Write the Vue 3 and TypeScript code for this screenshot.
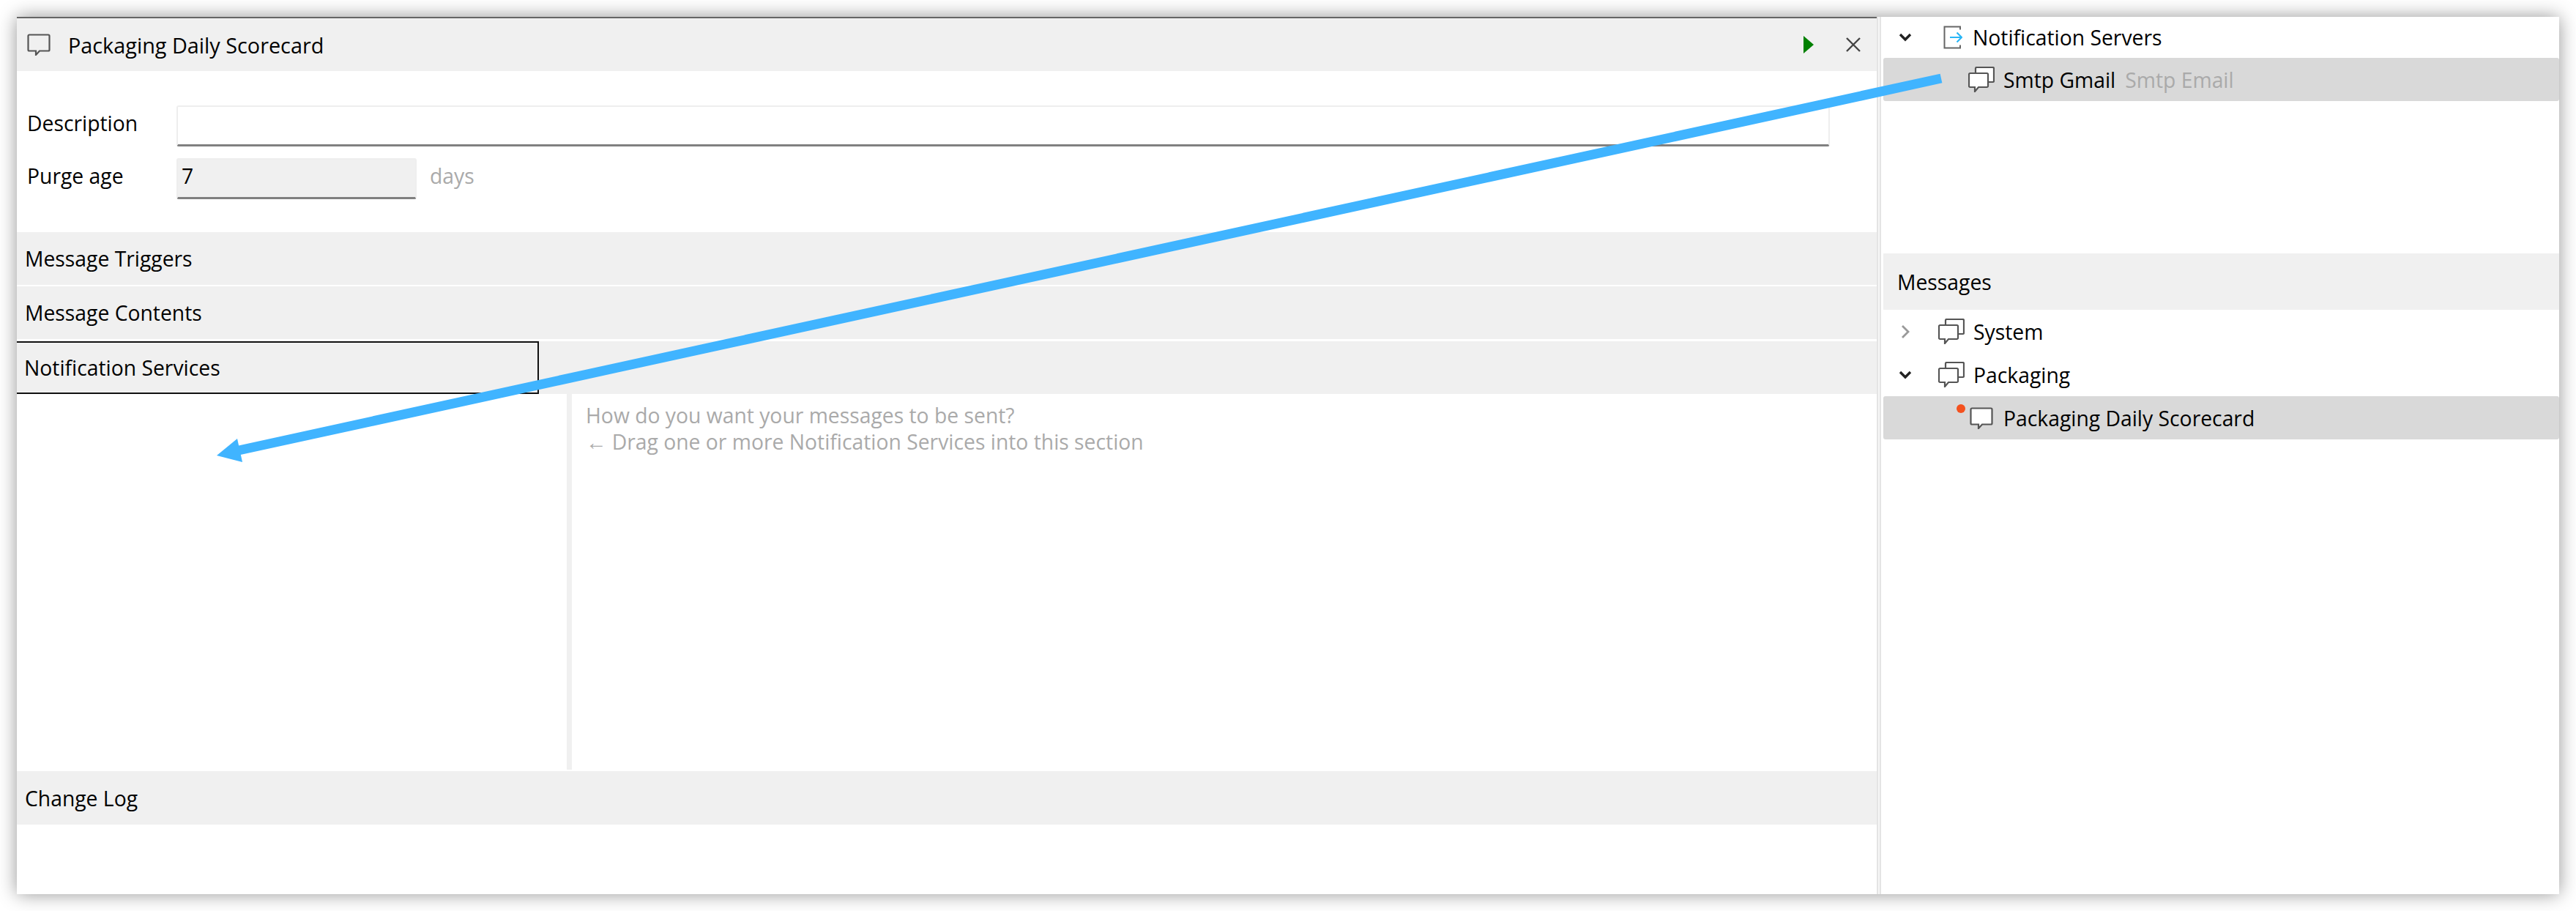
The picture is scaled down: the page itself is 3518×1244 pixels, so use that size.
<script setup lang="ts">
interface Row { label: string; sub?: string; chevron?: 'down' | 'right'; icon: 'server' | 'double' | 'single'; selected?: boolean; dot?: boolean; depth: number }
const serverRows: Row[] = [
  { label: 'Notification Servers', chevron: 'down', icon: 'server', depth: 0 },
  { label: 'Smtp Gmail', sub: 'Smtp Email', icon: 'double', selected: true, depth: 1 },
]
const messageRows: Row[] = [
  { label: 'System', chevron: 'right', icon: 'double', depth: 0 },
  { label: 'Packaging', chevron: 'down', icon: 'double', depth: 0 },
  { label: 'Packaging Daily Scorecard', icon: 'single', selected: true, dot: true, depth: 1 },
]
</script>

<template>
  <div class="page">
    <div class="window">
      <section class="editor">
        <header class="band title">
          <svg class="bubble" width="32" height="30" viewBox="0 0 32 30"><path d="M3 1.5h26a1.5 1.5 0 0 1 1.5 1.5v19a1.5 1.5 0 0 1-1.5 1.5H17l-5 5.500v-5.500H3a1.500 1.500 0 0 1-1.500-1.500V3A1.500 1.500 0 0 1 3 1.500z" /></svg>
          <span class="title-text">Packaging Daily Scorecard</span>
          <svg class="play" width="16" height="24" viewBox="0 0 16 24"><path d="M1 0l14 12L1 24z" /></svg>
          <svg class="close" width="20" height="20" viewBox="0 0 20 20"><path d="M1 1l18 18M19 1L1 19" /></svg>
        </header>
        <div class="form">
          <div class="field">
            <label class="field-label">Description</label>
            <div class="input wide"></div>
          </div>
          <div class="field second">
            <label class="field-label">Purge age</label>
            <div class="input short">7</div>
            <span class="unit">days</span>
          </div>
        </div>
        <div class="band section">Message Triggers</div>
        <div class="band section gap">Message Contents</div>
        <div class="band section gap focus-row"><div class="focus-box">Notification Services</div></div>
        <div class="split">
          <div class="drop"></div>
          <div class="splitter"></div>
          <div class="hint">
            <div>How do you want your messages to be sent?</div>
            <div>← Drag one or more Notification Services into this section</div>
          </div>
        </div>
        <div class="band section log">Change Log</div>
      </section>
      <div class="gutter"></div>
      <aside class="side">
        <div class="tree servers">
          <div v-for="r in serverRows" :key="r.label" class="row" :class="{ selected: r.selected, child: r.depth }">
            <span class="chev">
              <svg v-if="r.chevron === 'down'" width="18" height="12" viewBox="0 0 18 12"><path class="chev-dark" d="M2 2l7 7 7-7" /></svg>
            </span>
            <svg v-if="r.icon === 'server'" class="ico-server" width="26" height="32" viewBox="0 0 26 32"><path class="srv" d="M23 5.500V1.500H1.500v29H23v-4" /><path class="srv-arrow" d="M9 16h16M18.500 9.500L25 16l-6.500 6.500" /></svg>
            <svg v-else class="ico-double" width="36" height="35" viewBox="0 0 36 35"><path class="bub" d="M10 8V2.500a1.500 1.500 0 0 1 1.500-1.500h22a1.500 1.500 0 0 1 1.500 1.500v17a1.500 1.500 0 0 1-1.500 1.500H27" /><path class="bub" d="M2.500 9h23a1.500 1.500 0 0 1 1.500 1.500v16a1.500 1.500 0 0 1-1.500 1.500H14l-5 6v-6H2.500A1.500 1.500 0 0 1 1 26.500v-16A1.500 1.500 0 0 1 2.500 9z" /></svg>
            <span class="label">{{ r.label }}</span>
            <span v-if="r.sub" class="sub">{{ r.sub }}</span>
          </div>
        </div>
        <div class="band messages">Messages</div>
        <div class="tree">
          <div v-for="r in messageRows" :key="r.label" class="row" :class="{ selected: r.selected, child: r.depth, leaf: r.icon === 'single' }">
            <span class="chev">
              <svg v-if="r.chevron === 'down'" width="18" height="12" viewBox="0 0 18 12"><path class="chev-dark" d="M2 2l7 7 7-7" /></svg>
              <svg v-else-if="r.chevron === 'right'" width="12" height="20" viewBox="0 0 12 20"><path class="chev-gray" d="M2 2l8 8-8 8" /></svg>
            </span>
            <span v-if="r.dot" class="dot"></span>
            <svg v-if="r.icon === 'single'" class="ico-single" width="32" height="30" viewBox="0 0 32 30"><path class="bub" d="M3 1.500h26a1.500 1.500 0 0 1 1.500 1.500v19a1.500 1.500 0 0 1-1.500 1.500H17l-5 5.500v-5.500H3a1.500 1.500 0 0 1-1.500-1.500V3A1.500 1.500 0 0 1 3 1.500z" /></svg>
            <svg v-else class="ico-double" width="36" height="35" viewBox="0 0 36 35"><path class="bub" d="M10 8V2.500a1.500 1.500 0 0 1 1.500-1.500h22a1.500 1.500 0 0 1 1.500 1.500v17a1.500 1.500 0 0 1-1.500 1.500H27" /><path class="bub" d="M2.500 9h23a1.500 1.500 0 0 1 1.500 1.500v16a1.500 1.500 0 0 1-1.500 1.500H14l-5 6v-6H2.500A1.500 1.500 0 0 1 1 26.500v-16A1.500 1.500 0 0 1 2.500 9z" /></svg>
            <span class="label">{{ r.label }}</span>
          </div>
        </div>
      </aside>
      <svg class="annotation" width="3518" height="1244" viewBox="0 0 3518 1244">
        <path d="M2651 107L326 615" stroke="#40b4ff" stroke-width="13" fill="none" />
        <path d="M296 622L324 599L331 631z" fill="#40b4ff" />
      </svg>
    </div>
  </div>
</template>

<style>
html, body { margin: 0; background: #fff; }
</style>

<style scoped>
.page {
  position: relative;
  width: 3518px;
  height: 1244px;
  padding: 23px;
  box-sizing: border-box;
  background: #fff;
  font-family: "Open Sans", "Noto Sans", sans-serif;
  font-size: 28.3px;
  color: #000;
  overflow: hidden;
}
.window {
  display: flex;
  width: 3472px;
  height: 1198px;
  background: #fff;
  box-shadow: 0 0 24px rgba(0, 0, 0, 0.42);
}
.editor {
  width: 2540px;
  display: flex;
  flex-direction: column;
  border-top: 2px solid #666;
  box-sizing: border-box;
}
.band { background: #f0f0f0; display: flex; align-items: center; }
.title { height: 72px; padding: 0 0 0 14px; flex: none; }
.bubble path, .bub { fill: #fff; stroke: #555; stroke-width: 2.2; }
.bubble { margin-right: 24px; }
.bubble path { fill: none; }
.title-text { flex: 1; font-size: 28.8px; }
.play path { fill: #008000; }
.play { margin-right: 43px; }
.close { margin-right: 22px; }
.close path { stroke: #444; stroke-width: 2.4; fill: none; }
.form { height: 220px; box-sizing: border-box; padding-top: 47px; flex: none; }
.field { display: flex; align-items: center; height: 56px; padding-left: 14px; }
.second { margin-top: 16px; }
.field-label { width: 204px; flex: none; padding-bottom: 8px; }
.input {
  height: 56px;
  box-sizing: border-box;
  border: 2px solid #eee;
  border-bottom: 3px solid #808080;
  border-radius: 3px;
  display: flex;
  align-items: center;
  padding: 0 0 8px 5px;
}
.wide { width: 2258px; background: #fff; }
.short { width: 328px; background: #f0f0f0; }
.unit { margin-left: 18px; color: #aaa; padding-bottom: 8px; }
.section { height: 72px; padding-left: 11px; flex: none; }
.gap { margin-top: 2px; }
.focus-row { margin-top: 3px; padding-left: 0; align-items: stretch; }
.focus-box {
  width: 713px;
  box-sizing: border-box;
  border: 2px solid #111;
  border-left: 0;
  display: flex;
  align-items: center;
  padding-left: 10px;
}
.split { display: flex; height: 513px; flex: none; }
.drop { width: 751px; flex: none; }
.splitter { width: 7px; height: 513px; background: #f0f0f0; flex: none; }
.hint { color: #aaa; padding: 11px 0 0 19px; line-height: 36px; }
.log { margin-top: 2px; height: 73px; }
.gutter {
  width: 9px;
  flex: none;
  box-sizing: border-box;
  border-left: 2px solid #e4e4e4;
  background: linear-gradient(to right, #f6f6f6 2px, #e4e4e4 2px, #e4e4e4 4px, #fff 4px);
}
.side { flex: 1; display: flex; flex-direction: column; min-width: 0; }
.tree { display: flex; flex-direction: column; padding-top: 0; }
.servers { height: 323px; flex: none; }
.messages { height: 77px; padding-left: 19px; flex: none; }
.row { display: flex; align-items: center; height: 59px; position: relative; padding-left: 19px; flex: none; }
.servers .row:first-child { height: 56px; }
.selected { background: #d9d9d9; border-radius: 3px; height: 59px; }
.chev { width: 22px; display: flex; justify-content: center; margin-right: 34px; flex: none; }
.chev-dark { stroke: #222; stroke-width: 3.4; fill: none; }
.chev-gray { stroke: #999; stroke-width: 2.8; fill: none; }
.ico-server { margin-left: 7px; margin-right: 14px; }
.srv { fill: none; stroke: #666; stroke-width: 2; }
.srv-arrow { fill: none; stroke: #29b6f6; stroke-width: 2.2; }
.ico-double { margin-right: 12px; }
.child .ico-double { margin-left: 41px; }
.label { white-space: nowrap; }
.sub { margin-left: 13px; color: #aaa; }
.ico-single { margin-left: 43px; margin-right: 14px; }
.dot {
  position: absolute;
  left: 100px;
  top: 11px;
  width: 12px;
  height: 12px;
  border-radius: 50%;
  background: #f4511e;
}
.annotation { position: absolute; left: 0; top: 0; pointer-events: none; }
</style>
